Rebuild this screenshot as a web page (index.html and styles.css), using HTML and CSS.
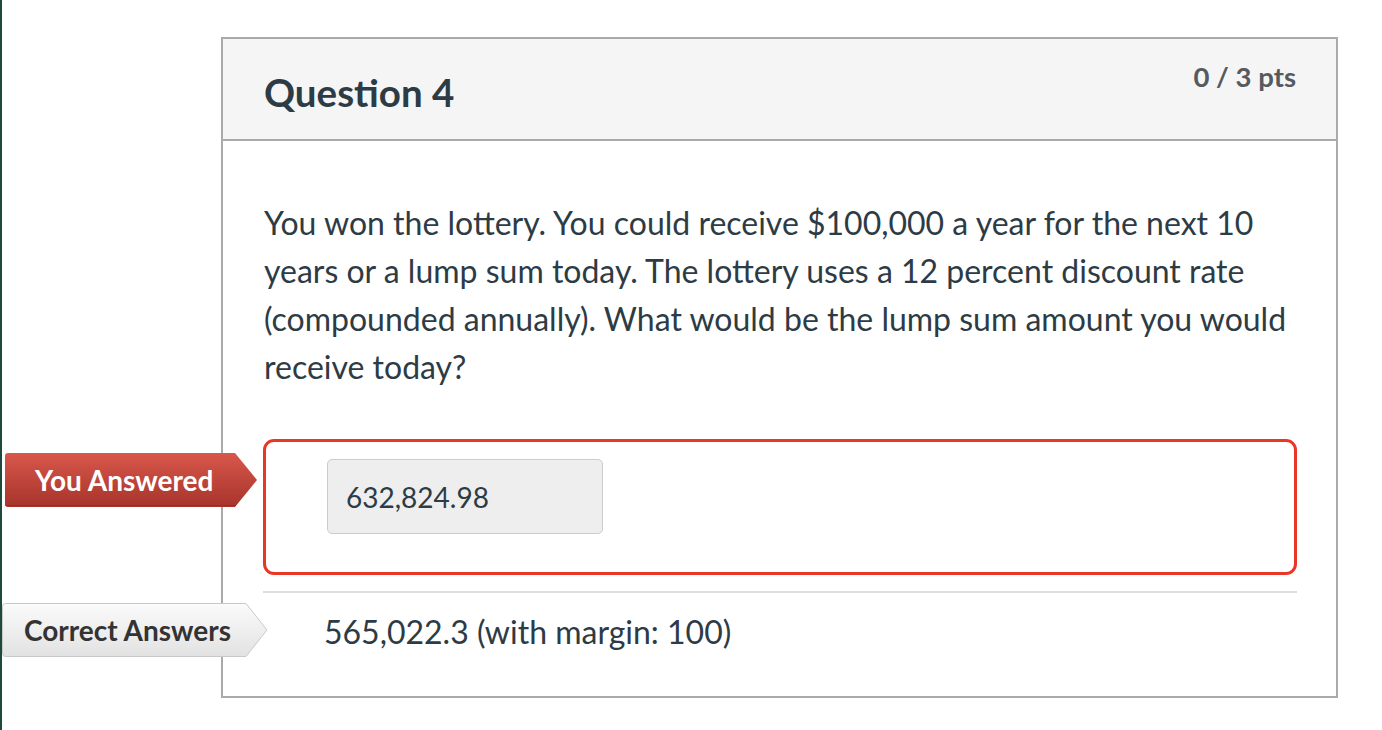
FILE: index.html
```html
<!DOCTYPE html>
<html>
<head>
<meta charset="utf-8">
<link rel="stylesheet" href="styles.css">
</head>
<body>
<div class="stripe"></div>
<main class="page">
  <section class="card">
    <header class="card-header">
      <h2 class="title">Question 4</h2>
      <div class="pts">0 / 3 pts</div>
    </header>
    <div class="card-body">
      <p class="question">You won the lottery. You could receive $100,000 a year for the next 10 years or a lump sum today. The lottery uses a 12 percent discount rate (compounded annually). What would be the lump sum amount you would receive today?</p>
      <div class="answer wrong">
        <div class="badge badge-you">
          <svg class="badge-bg" width="252" height="54" viewBox="0 0 252 54">
            <defs>
              <linearGradient id="gr" x1="0" y1="0" x2="0" y2="1">
                <stop offset="0" stop-color="#d9574b"/>
                <stop offset="1" stop-color="#a6342b"/>
              </linearGradient>
            </defs>
            <path d="M3,0 H230 L252,27 L230,54 H3 Q0,54 0,51 V3 Q0,0 3,0 Z" fill="url(#gr)"/>
            <path d="M0,52.5 H231" stroke="#8e2a22" stroke-width="1" opacity="0.6"/>
          </svg>
          <span class="badge-text">You Answered</span>
        </div>
        <div class="answer-input">632,824.98</div>
      </div>
      <div class="sep"></div>
      <div class="correct-row">
        <div class="badge badge-correct">
          <svg class="badge-bg" width="266" height="54" viewBox="0 0 266 54">
            <defs>
              <linearGradient id="gg" x1="0" y1="0" x2="0" y2="1">
                <stop offset="0" stop-color="#fbfbfb"/>
                <stop offset="1" stop-color="#e2e2e2"/>
              </linearGradient>
            </defs>
            <path d="M3.5,0.5 H244 L265,27 L244,53.5 H3.5 Q0.5,53.5 0.5,50.5 V3.5 Q0.5,0.5 3.5,0.5 Z" fill="url(#gg)" stroke="#c9c9c9" stroke-width="1"/>
          </svg>
          <span class="badge-text">Correct Answers</span>
        </div>
        <div class="correct-value">565,022.3 (with margin: 100)</div>
      </div>
    </div>
  </section>
</main>
</body>
</html>
```

FILE: styles.css
```css
* { box-sizing: border-box; }
html, body { margin: 0; padding: 0; background: #fff; }
body {
  display: flex;
  min-height: 730px;
  font-family: Lato, "Open Sans", sans-serif;
  color: #2d3b45;
}
.stripe {
  width: 2px;
  min-height: 730px;
  background: #1d4a3b;
  flex: none;
}
.page {
  padding: 37px 0 0 219px;
}
.card {
  width: 1117px;
  height: 661px;
  border: 2px solid #aaaaaa;
  background: #fff;
}
.card-header {
  height: 102px;
  background: #f5f5f5;
  border-bottom: 2px solid #aaaaaa;
  display: flex;
  justify-content: space-between;
  align-items: flex-start;
  padding: 0 40px 0 41px;
}
.title {
  margin: 0;
  padding-top: 30px;
  font-size: 38.5px;
  font-weight: 700;
  line-height: 1.2;
  color: #2d3b45;
}
.pts {
  padding-top: 21px;
  font-size: 27.5px;
  font-weight: 700;
  line-height: 1.2;
  color: #555a5f;
}
.card-body {
  padding: 58px 39px 0 40px;
}
.question {
  margin: 0 0 0 1px;
  font-size: 32px;
  line-height: 48px;
  color: #2d3b45;
}
.answer {
  position: relative;
  margin-top: 48px;
  height: 136px;
  border: 3px solid #ea3627;
  border-radius: 11px;
  padding: 17px 0 0 61px;
}
.answer-input {
  width: 276px;
  height: 75px;
  background: #eeeeee;
  border: 1px solid #cccccc;
  border-radius: 5px;
  display: flex;
  align-items: center;
  padding-left: 18px;
  font-size: 28px;
  color: #2d3b45;
}
.badge {
  position: absolute;
  height: 54px;
  display: flex;
  align-items: center;
}
.badge-bg {
  position: absolute;
  left: 0;
  top: 0;
}
.badge-text {
  position: relative;
  font-size: 28px;
  font-weight: 700;
  line-height: 1;
}
.badge-you {
  left: -261px;
  top: 11px;
  width: 252px;
  padding-left: 30px;
}
.badge-you .badge-text { color: #ffffff; }
.badge-correct {
  left: -261px;
  top: 10px;
  width: 266px;
  padding-left: 22px;
}
.badge-correct .badge-text { color: #333333; }
.sep {
  margin-top: 16px;
  height: 2px;
  background: #dddddd;
}
.correct-row {
  position: relative;
  padding: 20px 0 0 61px;
}
.correct-value {
  font-size: 32px;
  line-height: 1.2;
  color: #2d3b45;
}
```
